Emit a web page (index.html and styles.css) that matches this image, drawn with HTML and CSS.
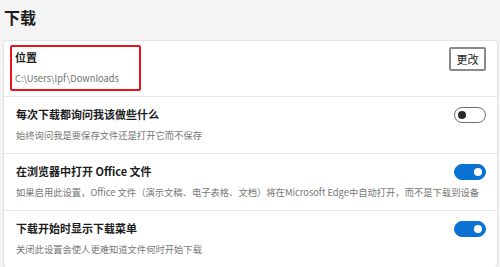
FILE: index.html
```html
<!DOCTYPE html>
<html lang="zh-CN">
<head>
<meta charset="utf-8">
<link rel="stylesheet" href="styles.css">
</head>
<body>
<h1 class="page-title">下载</h1>
<div class="card">
  <div class="row row-first">
    <div class="highlight">
      <div class="row-title">位置</div>
      <div class="row-sub path">C:\Users\lpf\Downloads</div>
    </div>
    <button class="btn">更改</button>
  </div>
  <div class="row">
    <div class="row-text">
      <div class="row-title">每次下载都询问我该做些什么</div>
      <div class="row-sub">始终询问我是要保存文件还是打开它而不保存</div>
    </div>
    <span class="toggle"><span class="knob"></span></span>
  </div>
  <div class="row">
    <div class="row-text">
      <div class="row-title">在浏览器中打开 Office 文件</div>
      <div class="row-sub">如果启用此设置，Office 文件（演示文稿、电子表格、文档）将在Microsoft Edge中自动打开，而不是下载到设备</div>
    </div>
    <span class="toggle on"><span class="knob"></span></span>
  </div>
  <div class="row">
    <div class="row-text">
      <div class="row-title">下载开始时显示下载菜单</div>
      <div class="row-sub">关闭此设置会使人更难知道文件何时开始下载</div>
    </div>
    <span class="toggle on"><span class="knob"></span></span>
  </div>
</div>
</body>
</html>
```
FILE: styles.css
```css
html, body {
  margin: 0;
  padding: 0;
  background: #f4f4f4;
  font-family: "Noto Sans CJK SC", "Noto Sans", sans-serif;
  color: #1b1b1b;
}
.page-title {
  margin: 0;
  padding: 6px 0 0 4px;
  height: 34px;
  font-size: 16px;
  line-height: 22px;
  font-weight: 700;
}
.card {
  margin: 0 2px 0 3px;
  background: #fff;
  border: 1px solid #e3e3e3;
  border-radius: 4px;
  box-shadow: 0 1px 2px rgba(0,0,0,0.06);
}
.row {
  display: flex;
  align-items: flex-start;
  justify-content: space-between;
  padding: 8px 11px 8px 12px;
  height: 40px;
  border-top: 1px solid #e8e8e8;
}
.row-first {
  border-top: none;
  padding: 4px 11px 6px 6px;
  height: 45px;
}
.highlight {
  border: 2px solid #e8141c;
  border-radius: 2px;
  width: 122px;
  padding: 1px 2px 2px 3px;
}
.row-text {
  flex: 1;
  min-width: 0;
}
.row-title {
  font-size: 11px;
  font-weight: 700;
  line-height: 18px;
  height: 18px;
  white-space: nowrap;
}
.row-sub {
  font-size: 9.3px;
  line-height: 18px;
  height: 18px;
  margin-top: 3px;
  color: #777;
  white-space: nowrap;
}
.path {
  color: #707070;
}
.btn {
  margin-top: 2px;
  width: 37px;
  height: 24px;
  padding: 0;
  background: #fff;
  border: 2px solid #8a8a8a;
  border-radius: 2px;
  font-family: "Noto Sans CJK SC", sans-serif;
  font-size: 11px;
  color: #1b1b1b;
}
.toggle {
  margin-top: 2px;
  flex: none;
  width: 32px;
  height: 16px;
  box-sizing: border-box;
  border: 1px solid #6e6e6e;
  border-radius: 8px;
  display: flex;
  align-items: center;
  padding: 0 3px;
  background: #fff;
}
.knob {
  width: 8px;
  height: 8px;
  border-radius: 50%;
  background: #2a2a2a;
}
.toggle.on {
  background: #0b72d4;
  border-color: #0b72d4;
  justify-content: flex-end;
}
.toggle.on .knob {
  background: #fff;
}
```
